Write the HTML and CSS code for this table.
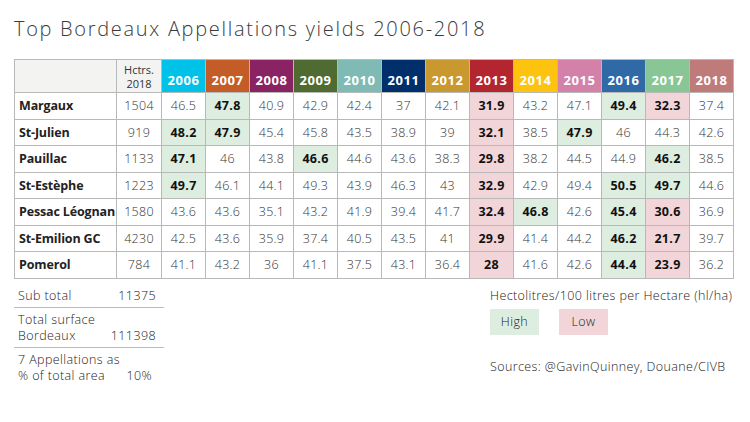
FILE: index.html
```html
<!DOCTYPE html>
<html>
<head>
<meta charset="utf-8">
<link rel="stylesheet" href="styles.css">
</head>
<body>
<h1 class="title">Top Bordeaux Appellations yields 2006-2018</h1>
<table class="yields">
<colgroup><col class="c-name"><col class="c-ha"><col span="13" class="c-yr"></colgroup>
<thead>
<tr>
<th class="h-blank"></th>
<th class="h-ha"><span class="ha-l">Hctrs.</span><span class="ha-l">2018</span></th>
<th class="y06">2006</th><th class="y07">2007</th><th class="y08">2008</th><th class="y09">2009</th><th class="y10">2010</th><th class="y11">2011</th><th class="y12">2012</th><th class="y13">2013</th><th class="y14">2014</th><th class="y15">2015</th><th class="y16">2016</th><th class="y17">2017</th><th class="y18">2018</th>
</tr>
</thead>
<tbody>
<tr><td class="name">Margaux</td><td>1504</td><td>46.5</td><td class="hi">47.8</td><td>40.9</td><td>42.9</td><td>42.4</td><td>37</td><td>42.1</td><td class="lo">31.9</td><td>43.2</td><td>47.1</td><td class="hi">49.4</td><td class="lo">32.3</td><td>37.4</td></tr>
<tr><td class="name">St-Julien</td><td>919</td><td class="hi">48.2</td><td class="hi">47.9</td><td>45.4</td><td>45.8</td><td>43.5</td><td>38.9</td><td>39</td><td class="lo">32.1</td><td>38.5</td><td class="hi">47.9</td><td>46</td><td>44.3</td><td>42.6</td></tr>
<tr><td class="name">Pauillac</td><td>1133</td><td class="hi">47.1</td><td>46</td><td>43.8</td><td class="hi">46.6</td><td>44.6</td><td>43.6</td><td>38.3</td><td class="lo">29.8</td><td>38.2</td><td>44.5</td><td>44.9</td><td class="hi">46.2</td><td>38.5</td></tr>
<tr><td class="name">St-Estèphe</td><td>1223</td><td class="hi">49.7</td><td>46.1</td><td>44.1</td><td>49.3</td><td>43.9</td><td>46.3</td><td>43</td><td class="lo">32.9</td><td>42.9</td><td>49.4</td><td class="hi">50.5</td><td class="hi">49.7</td><td>44.6</td></tr>
<tr><td class="name">Pessac Léognan</td><td>1580</td><td>43.6</td><td>43.6</td><td>35.1</td><td>43.2</td><td>41.9</td><td>39.4</td><td>41.7</td><td class="lo">32.4</td><td class="hi">46.8</td><td>42.6</td><td class="hi">45.4</td><td class="lo">30.6</td><td>36.9</td></tr>
<tr><td class="name">St-Emilion GC</td><td>4230</td><td>42.5</td><td>43.6</td><td>35.9</td><td>37.4</td><td>40.5</td><td>43.5</td><td>41</td><td class="lo">29.9</td><td>41.4</td><td>44.2</td><td class="hi">46.2</td><td class="lo">21.7</td><td>39.7</td></tr>
<tr><td class="name">Pomerol</td><td>784</td><td>41.1</td><td>43.2</td><td>36</td><td>41.1</td><td>37.5</td><td>43.1</td><td>36.4</td><td class="lo">28</td><td>41.6</td><td>42.6</td><td class="hi">44.4</td><td class="lo">23.9</td><td>36.2</td></tr>
</tbody>
</table>
<div class="footer">
  <div class="totals">
    <div class="trow"><span>Sub total</span><span class="tval">11375</span></div>
    <div class="trow"><span>Total surface<br>Bordeaux</span><span class="tval">111398</span></div>
    <div class="trow last"><span>7 Appellations as<br>% of total area</span><span class="tval pct">10%</span></div>
  </div>
  <div class="legend">
    <div class="unit">Hectolitres/100 litres per Hectare (hl/ha)</div>
    <div class="keys"><span class="key k-hi">High</span><span class="key k-lo">Low</span></div>
    <div class="src">Sources: @GavinQuinney, Douane/CIVB</div>
  </div>
</div>
</body>
</html>
```
FILE: styles.css
```css
html, body { margin: 0; padding: 0; background: #fff; }
body {
  width: 750px; height: 422px; overflow: hidden;
  font-family: "Open Sans", "DejaVu Sans", sans-serif;
  color: #222;
  padding: 0 0 0 14px; box-sizing: border-box;
}
.title {
  margin: 0; padding-top: 17px; height: 59px; box-sizing: border-box;
  font-size: 20px; font-weight: 300; color: #3a3a3a; letter-spacing: 1.7px;
  line-height: 24px;
}
.yields {
  border-collapse: collapse; table-layout: fixed; width: 720px;
  font-size: 12.5px; letter-spacing: 0.3px;
}
.c-name { width: 102px; }
.c-ha { width: 45px; }
.c-yr { width: 44px; }
.yields th, .yields td { border: 1px solid #b8b8b8; padding: 0; text-align: center; }
.yields thead th {
  height: 33px; color: #fff; font-weight: 700; font-size: 13px; vertical-align: bottom;
  padding-bottom: 3px; box-sizing: border-box; letter-spacing: 0.6px;
}
.yields thead th.h-blank { background: #f3f3f1; }
.yields thead th.h-ha { background: #f3f3f1; color: #333; font-weight: 400; font-size: 11px; padding-bottom: 1px; letter-spacing: 0; }
.ha-l { display: block; line-height: 14px; height: 14px; }
.yields td { height: 25.5px; font-weight: 300; color: #333; }
.yields td.name { text-align: left; padding-left: 4px; font-weight: 700; color: #222; white-space: nowrap; font-size: 12.5px; letter-spacing: -0.15px; }
.yields td.hi { background: #ddeee0; font-weight: 700; color: #111; }
.yields td.lo { background: #f2d5d8; font-weight: 700; color: #111; }
.y06 { background: #00c1e8; }
.y07 { background: #c45c28; }
.y08 { background: #892363; }
.y09 { background: #506b31; }
.y10 { background: #80bab4; }
.y11 { background: #002f6c; }
.y12 { background: #c9982f; }
.y13 { background: #b3262f; }
.y14 { background: #fec30f; }
.y15 { background: #d381a9; }
.y16 { background: #2f6aa7; }
.y17 { background: #89c695; }
.y18 { background: #bf7b79; }
.footer { display: flex; justify-content: space-between; width: 722px; margin-top: 9px; font-size: 12.5px; font-weight: 300; color: #222; letter-spacing: 0.4px; }
.totals { width: 150px; }
.trow { display: flex; justify-content: space-between; align-items: flex-end; border-bottom: 1px solid #bbb; padding: 0 8px 3px 4px; line-height: 16px; margin-bottom: 4px; }
.trow.last { border-bottom: none; }
.pct { padding-right: 4px; }
.legend { width: 246px; }
.unit { line-height: 16px; white-space: nowrap; }
.keys { display: flex; gap: 20px; margin-top: 5px; }
.key { display: block; width: 49px; height: 26px; line-height: 26px; text-align: center; }
.k-hi { background: #ddeee0; }
.k-lo { background: #f2d5d8; }
.src { margin-top: 23px; }
```
